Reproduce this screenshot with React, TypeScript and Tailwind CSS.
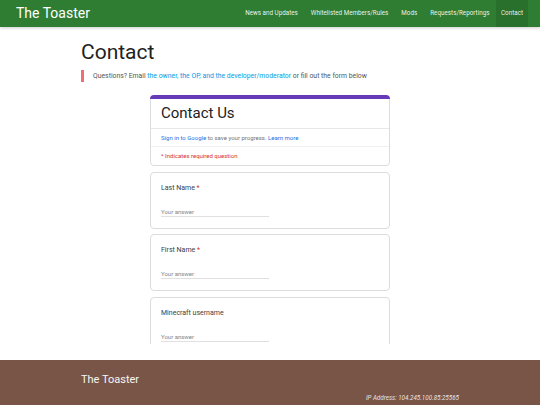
import React from 'react';

const navLinks = ['News and Updates', 'Whitelisted Members/Rules', 'Mods', 'Requests/Reportings', 'Contact'];

const questions = [
  { label: 'Last Name', required: true },
  { label: 'First Name', required: true },
  { label: 'Minecraft username', required: false },
];

const QuestionCard: React.FC<{ label: string; required: boolean }> = ({ label, required }) => (
  <div className="shrink-0 rounded-[4px] border border-[#dadce0] bg-white px-[10px] pt-[10px] pb-[11px]">
    <div className="pt-[1px] text-[7px] leading-[8px] text-[#3c4043]">
      {label}
      {required && <span className="text-[#d93025]"> *</span>}
    </div>
    <div className="mt-[15px] w-[108px] border-b border-[#e0e0e0] text-[6px] leading-[9px] text-[#80868b]">
      Your answer
    </div>
  </div>
);

export default function App() {
  return (
    <div className="flex min-h-[405px] flex-col bg-white" style={{ fontFamily: 'Roboto, "Liberation Sans", sans-serif' }}>
      <nav className="relative z-10 flex h-[27px] items-center justify-between bg-[#2e7d32] pl-[16px] pr-[12px] shadow-[0_1px_3px_rgba(0,0,0,0.2)]">
        <span className="text-[14px] leading-[27px] text-white">The Toaster</span>
        <ul className="flex h-full">
          {navLinks.map((link) => (
            <li
              key={link}
              className={`flex h-full items-center text-[6.3px] text-[rgba(255,255,255,0.92)] ${link === 'Contact' ? 'bg-[#29702d] px-[5px]' : 'px-[6.5px]'}`}
            >
              {link}
            </li>
          ))}
        </ul>
      </nav>

      <main className="mx-[81px] flex flex-col">
        <h1 className="mt-[12px] text-[21px] leading-[26px] text-[#222]">Contact</h1>
        <blockquote className="mt-[5px] border-l-[3px] border-[#ee6e73] pl-[9px] text-[6.85px] leading-[12px] text-[#555]">
          Questions? Email <span className="text-[#039be5]">the owner, the OP, and the developer/moderator</span> or fill out the form below
        </blockquote>

        <div className="mx-auto mt-[13px] flex h-[249px] w-[240px] flex-col gap-[5.5px] overflow-hidden">
          <div className="shrink-0 overflow-hidden rounded-[4px]">
            <div className="h-[4px] bg-[#673ab7]" />
            <div className="rounded-b-[4px] border-x border-b border-[#dadce0] bg-white">
              <div className="flex h-[29px] items-center px-[10px] text-[15px] text-[#202124]">Contact Us</div>
              <div className="flex h-[18px] items-center border-t border-[#e8e8e8] px-[10px] text-[6px] text-[#70757a]">
                <span className="text-[#1a73e8]">Sign in to Google</span>
                <span>&nbsp;to save your progress.&nbsp;</span>
                <span className="text-[#1a73e8]">Learn more</span>
              </div>
              <div className="flex h-[19px] items-center border-t border-[#f0f0f0] px-[10px] pb-[2px] text-[6px] text-[#d93025]">
                * Indicates required question
              </div>
            </div>
          </div>
          {questions.map((q) => (
            <QuestionCard key={q.label} label={q.label} required={q.required} />
          ))}
        </div>
      </main>

      <footer className="mt-[16px] flex-1 bg-[#795548]">
        <div className="mx-[81px] pt-[13px] pb-[6px]">
          <div className="text-[11px] leading-[14px] text-[#f5f5f5]">The Toaster</div>
          <div className="mt-[7px] text-right text-[6.25px] italic leading-[8px] text-[rgba(255,255,255,0.85)]">
            IP Address: 104.245.100.85:25565
          </div>
        </div>
      </footer>
    </div>
  );
}
